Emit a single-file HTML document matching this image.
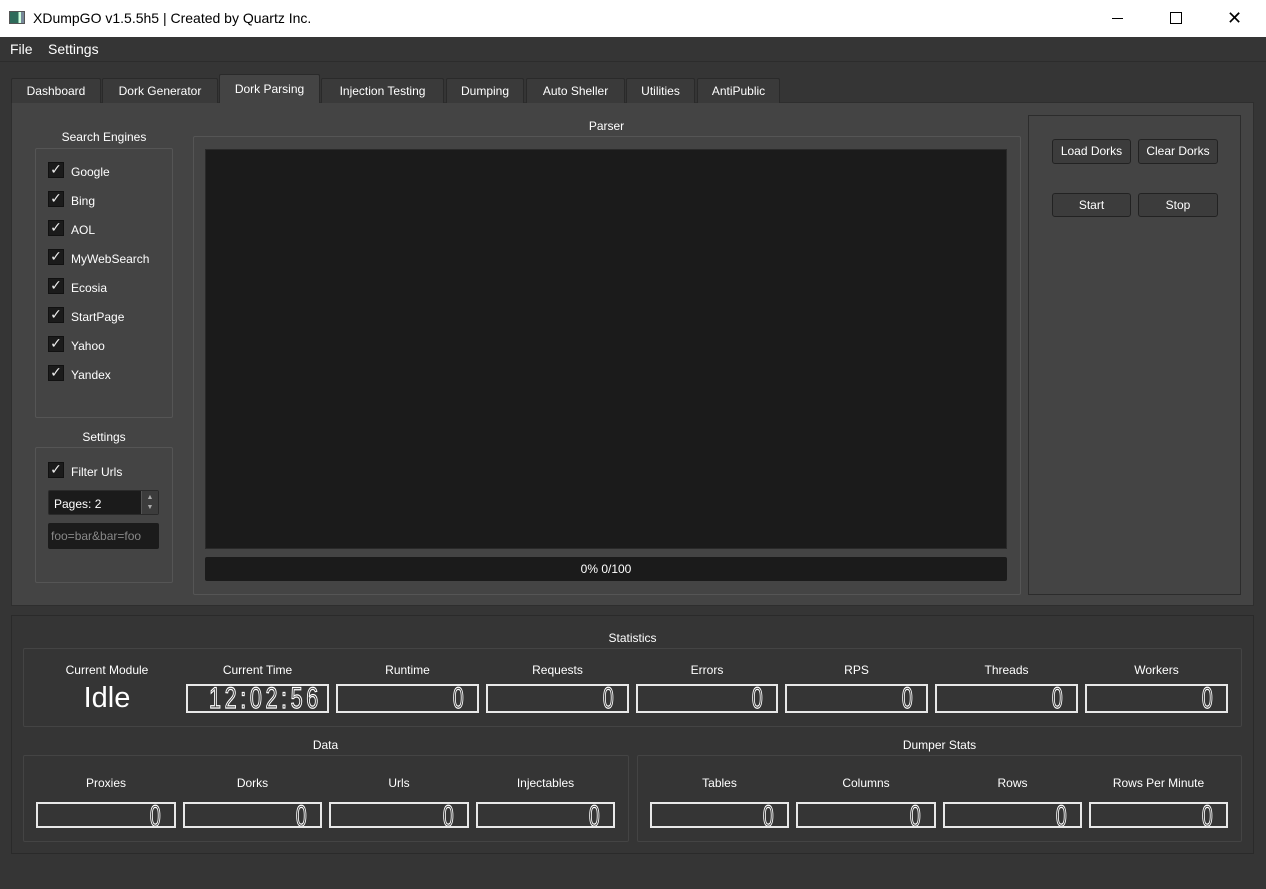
<!DOCTYPE html>
<html><head><meta charset="utf-8"><style>
*{box-sizing:border-box;margin:0;padding:0}
body{width:1266px;height:889px;background:#353535;font-family:"Liberation Sans",sans-serif;font-size:12px;color:#fff;position:relative;overflow:hidden}
.a{position:absolute}
.title{left:0;top:0;width:1266px;height:37px;background:#fff;color:#000}
.menu{top:37px;left:0;width:1266px;height:25px;border-bottom:1px solid #2c2c2c;font-size:14px}
.tab{top:78px;height:25px;background:#3a3a3a;border:1px solid #2a2a2a;border-bottom:none;border-radius:2px 2px 0 0;text-align:center;line-height:24px;font-size:12px}
.tab.act{top:74px;height:29px;background:#444;line-height:28px}
.pane{left:11px;top:102px;width:1243px;height:504px;background:#444;border:1px solid #2e2e2e}
.grp{border:1px solid #555;border-radius:2px}
.lbl{text-align:center;font-size:12px}
.cb{width:16px;height:16px;background:#1b1b1b;border:1px solid #111;font-size:14px;line-height:15px;text-align:center;font-family:"DejaVu Sans",sans-serif;color:#eee}
.ct{font-size:12px}
.btn{background:#3c3c3c;border:1px solid #222;border-radius:3px;text-align:center;line-height:22px;font-size:12px}
.lcd{height:29px;border:2px solid #e8e8e8;overflow:hidden}
.lcd span{position:absolute;right:10px;top:-4px;font-family:"Liberation Sans Narrow","Liberation Sans",sans-serif;font-size:30px;color:transparent;-webkit-text-stroke:1.2px #fff;transform:scaleX(.65)}
</style></head><body>
<div class="a title">
 <div class="a" style="left:9px;top:11px;width:16px;height:13px;border:1px solid #555;background:linear-gradient(90deg,#2e6b5a 0 60%,#cfd 60% 80%,#789 80%)"></div>
 <div class="a" style="left:33px;top:10px;font-size:14px">XDumpGO v1.5.5h5 | Created by Quartz Inc.</div>
 <div class="a" style="left:1112px;top:18px;width:11px;height:1px;background:#000"></div>
 <div class="a" style="left:1170px;top:12px;width:12px;height:12px;border:1px solid #000"></div>
 <div class="a" style="left:1227px;top:8px;font-size:18px;font-weight:300">✕</div>
</div>
<div class="a menu"><span class="a" style="left:10px;top:4px">File</span><span class="a" style="left:48px;top:4px">Settings</span></div>
<div class="a pane"></div>
<div class="a tab" style="left:11px;width:90px">Dashboard</div>
<div class="a tab" style="left:102px;width:116px">Dork Generator</div>
<div class="a tab act" style="left:219px;width:101px">Dork Parsing</div>
<div class="a tab" style="left:321px;width:123px">Injection Testing</div>
<div class="a tab" style="left:446px;width:78px">Dumping</div>
<div class="a tab" style="left:526px;width:99px">Auto Sheller</div>
<div class="a tab" style="left:626px;width:69px">Utilities</div>
<div class="a tab" style="left:697px;width:83px">AntiPublic</div>

<div class="a lbl" style="left:35px;top:130px;width:138px">Search Engines</div>
<div class="a grp" style="left:35px;top:148px;width:138px;height:270px"></div>
<div class="a lbl" style="left:35px;top:430px;width:138px">Settings</div>
<div class="a grp" style="left:35px;top:447px;width:138px;height:136px"></div>

<div class="a cb" style="left:48px;top:162px">✓</div><div class="a ct" style="left:71px;top:165px">Google</div>
<div class="a cb" style="left:48px;top:191px">✓</div><div class="a ct" style="left:71px;top:194px">Bing</div>
<div class="a cb" style="left:48px;top:220px">✓</div><div class="a ct" style="left:71px;top:223px">AOL</div>
<div class="a cb" style="left:48px;top:249px">✓</div><div class="a ct" style="left:71px;top:252px">MyWebSearch</div>
<div class="a cb" style="left:48px;top:278px">✓</div><div class="a ct" style="left:71px;top:281px">Ecosia</div>
<div class="a cb" style="left:48px;top:307px">✓</div><div class="a ct" style="left:71px;top:310px">StartPage</div>
<div class="a cb" style="left:48px;top:336px">✓</div><div class="a ct" style="left:71px;top:339px">Yahoo</div>
<div class="a cb" style="left:48px;top:365px">✓</div><div class="a ct" style="left:71px;top:368px">Yandex</div>
<div class="a cb" style="left:48px;top:462px">✓</div><div class="a ct" style="left:71px;top:465px">Filter Urls</div>
<div class="a" style="left:48px;top:490px;width:111px;height:25px;background:#1b1b1b;border-radius:2px;border:1px solid #2a2a2a"><span class="a" style="left:5px;top:6px">Pages: 2</span>
 <div class="a" style="right:0;top:0;width:17px;height:23px;background:#3c3c3c;border-left:1px solid #555;font-size:7px;color:#aaa;text-align:center;line-height:10px;padding-top:2px">▲<br>▼</div></div>
<div class="a" style="left:48px;top:523px;width:111px;height:26px;background:#1b1b1b;border-radius:2px;color:#888;padding:6px 3px">foo=bar&amp;bar=foo</div>

<div class="a lbl" style="left:193px;top:119px;width:827px">Parser</div>
<div class="a grp" style="left:193px;top:136px;width:828px;height:459px"></div>
<div class="a" style="left:205px;top:149px;width:802px;height:400px;background:#1b1b1b;border:1px solid #2a2a2a"></div>
<div class="a" style="left:205px;top:557px;width:802px;height:24px;background:#1b1b1b;border-radius:2px;text-align:center;line-height:24px">0% 0/100</div>

<div class="a" style="left:1028px;top:115px;width:213px;height:480px;border:1px solid #2c2c2c"></div>
<div class="a btn" style="left:1052px;top:139px;width:79px;height:25px">Load Dorks</div>
<div class="a btn" style="left:1138px;top:139px;width:80px;height:25px">Clear Dorks</div>
<div class="a btn" style="left:1052px;top:193px;width:79px;height:24px">Start</div>
<div class="a btn" style="left:1138px;top:193px;width:80px;height:24px">Stop</div>

<div class="a" style="left:11px;top:615px;width:1243px;height:239px;border:1px solid #2a2a2a"></div>
<div class="a lbl" style="left:11px;top:631px;width:1243px">Statistics</div>
<div class="a grp" style="left:23px;top:648px;width:1219px;height:79px;border-color:#444"></div>
<div class="a lbl" style="left:36px;top:663px;width:142px">Current Module</div>
<div class="a lbl" style="left:36px;top:682px;width:142px;font-size:29px">Idle</div>
<div class="a lbl" style="left:186px;top:663px;width:143px">Current Time</div>
<div class="a lcd" style="left:186px;top:684px;width:143px"><span style="right:auto;left:21px;letter-spacing:5px;transform:scaleX(.72);transform-origin:left top">12:02:56</span></div>
<div class="a lbl" style="left:336px;top:663px;width:143px">Runtime</div><div class="a lcd" style="left:336px;top:684px;width:143px"><span>0</span></div>
<div class="a lbl" style="left:486px;top:663px;width:143px">Requests</div><div class="a lcd" style="left:486px;top:684px;width:143px"><span>0</span></div>
<div class="a lbl" style="left:636px;top:663px;width:142px">Errors</div><div class="a lcd" style="left:636px;top:684px;width:142px"><span>0</span></div>
<div class="a lbl" style="left:785px;top:663px;width:143px">RPS</div><div class="a lcd" style="left:785px;top:684px;width:143px"><span>0</span></div>
<div class="a lbl" style="left:935px;top:663px;width:143px">Threads</div><div class="a lcd" style="left:935px;top:684px;width:143px"><span>0</span></div>
<div class="a lbl" style="left:1085px;top:663px;width:143px">Workers</div><div class="a lcd" style="left:1085px;top:684px;width:143px"><span>0</span></div>

<div class="a lbl" style="left:23px;top:738px;width:605px">Data</div>
<div class="a grp" style="left:23px;top:755px;width:606px;height:87px;border-color:#444"></div>
<div class="a lbl" style="left:637px;top:738px;width:605px">Dumper Stats</div>
<div class="a grp" style="left:637px;top:755px;width:605px;height:87px;border-color:#444"></div>

<div class="a lbl" style="left:36px;top:776px;width:140px">Proxies</div><div class="a lcd" style="left:36px;top:802px;width:140px;height:26px"><span>0</span></div>
<div class="a lbl" style="left:183px;top:776px;width:139px">Dorks</div><div class="a lcd" style="left:183px;top:802px;width:139px;height:26px"><span>0</span></div>
<div class="a lbl" style="left:329px;top:776px;width:140px">Urls</div><div class="a lcd" style="left:329px;top:802px;width:140px;height:26px"><span>0</span></div>
<div class="a lbl" style="left:476px;top:776px;width:139px">Injectables</div><div class="a lcd" style="left:476px;top:802px;width:139px;height:26px"><span>0</span></div>
<div class="a lbl" style="left:650px;top:776px;width:139px">Tables</div><div class="a lcd" style="left:650px;top:802px;width:139px;height:26px"><span>0</span></div>
<div class="a lbl" style="left:796px;top:776px;width:140px">Columns</div><div class="a lcd" style="left:796px;top:802px;width:140px;height:26px"><span>0</span></div>
<div class="a lbl" style="left:943px;top:776px;width:139px">Rows</div><div class="a lcd" style="left:943px;top:802px;width:139px;height:26px"><span>0</span></div>
<div class="a lbl" style="left:1089px;top:776px;width:139px">Rows Per Minute</div><div class="a lcd" style="left:1089px;top:802px;width:139px;height:26px"><span>0</span></div>
</body></html>
